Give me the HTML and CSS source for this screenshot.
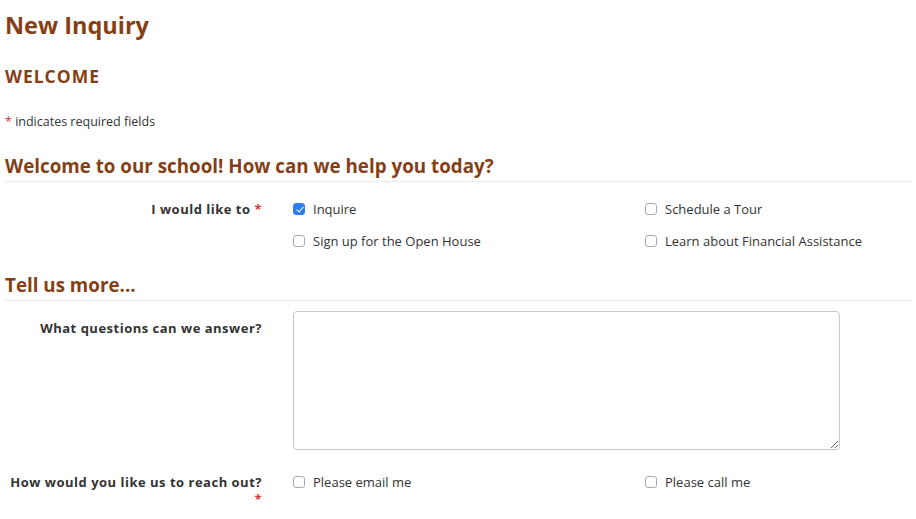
FILE: index.html
```html
<!DOCTYPE html>
<html lang="en">
<head>
    <meta charset="UTF-8">
    <meta name="viewport" content="width=device-width, initial-scale=1.0">
    <title>New Inquiry</title>
    <link rel="stylesheet" href="styles.css">
</head>
<body>
    <h1 class="page-title">New Inquiry</h1>

    <h2 class="intro-title">WELCOME</h2>
    <p class="required-note"><span class="req">*</span> indicates required fields</p>

    <form class="inquiry-form" onsubmit="event.preventDefault();">
        <h3 class="section-title">Welcome to our school! How can we help you today?</h3>

        <div class="form-row">
            <div class="field-label">I would like to <span class="req">*</span></div>
            <div class="options">
                <label class="option"><input type="checkbox" checked> Inquire</label>
                <label class="option"><input type="checkbox"> Schedule a Tour</label>
                <label class="option"><input type="checkbox"> Sign up for the Open House</label>
                <label class="option"><input type="checkbox"> Learn about Financial Assistance</label>
            </div>
        </div>

        <h3 class="section-title">Tell us more...</h3>

        <div class="form-row">
            <label class="field-label" for="questions">What questions can we answer?</label>
            <textarea id="questions" class="questions"></textarea>
        </div>

        <div class="form-row">
            <div class="field-label">How would you like us to reach out? <span class="req">*</span></div>
            <div class="options">
                <label class="option"><input type="checkbox"> Please email me</label>
                <label class="option"><input type="checkbox"> Please call me</label>
            </div>
        </div>
    </form>
</body>
</html>
```

FILE: styles.css
```css
body {
    font-family: 'Open Sans', Lato, sans-serif;
    margin: 0;
    padding: 0 5px;
    color: #333;
    background-color: #fff;
    overflow: hidden;
}

.page-title {
    font-size: 23.5px;
    color: #853f16;
    margin: 10px 0 0;
    line-height: 30px;
}

.intro-title {
    font-size: 17.5px;
    color: #853f16;
    margin: 24px 0 0;
    line-height: 24px;
    letter-spacing: 1px;
}

.required-note {
    font-size: 12.5px;
    margin: 26px 0 0;
    line-height: 16px;
}

.req {
    color: #d9383a;
}

.section-title {
    font-size: 18.8px;
    color: #853f16;
    margin: 0;
    padding: 0 0 3px;
    line-height: 24px;
    border-bottom: 1px dotted #ddd;
}

.inquiry-form {
    margin-top: 24px;
}

.form-row {
    display: flex;
    align-items: flex-start;
    margin-top: 19px;
    margin-bottom: 24px;
}

.field-label {
    width: 257px;
    flex: none;
    text-align: right;
    font-size: 13px;
    font-weight: bold;
    letter-spacing: 0.5px;
    line-height: 17px;
    padding-right: 31px;
    color: #333;
}

.options {
    display: grid;
    grid-template-columns: 352px auto;
    row-gap: 16px;
}

.option {
    display: flex;
    align-items: center;
    font-size: 13px;
    line-height: 16px;
}

.option input {
    appearance: none;
    -webkit-appearance: none;
    width: 12px;
    height: 12px;
    margin: 0 8px 0 0;
    border: 1px solid #aaa;
    border-radius: 3px;
    background-color: #fff;
    position: relative;
}

.option input:checked {
    background-color: #2d7ef6;
    border-color: #2d7ef6;
}

.option input:checked::after {
    content: "";
    position: absolute;
    left: 3.5px;
    top: 1px;
    width: 3px;
    height: 6px;
    border: solid #fff;
    border-width: 0 1.6px 1.6px 0;
    transform: rotate(40deg);
}

.questions {
    width: 547px;
    height: 139px;
    box-sizing: border-box;
    margin: -9px 0 0;
    border: 1px solid #c8c8c8;
    border-radius: 4px;
    padding: 6px;
    font-family: inherit;
    font-size: 13px;
}
```
